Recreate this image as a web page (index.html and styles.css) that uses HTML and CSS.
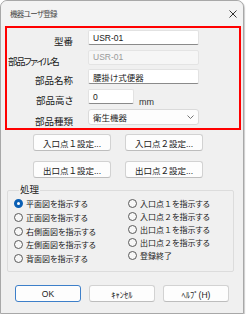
FILE: index.html
```html
<!doctype html>
<html lang="ja">
<head>
    <meta charset="UTF-8">
    <title>機器ユーザ登録</title>
    <link rel="stylesheet" href="styles.css">
</head>
<body>
    <div class="window">
<!--    title bar    -->
        <div class="titlebar">
            <span class="title">機器ユーザ登録</span>
            <svg class="close" width="8" height="8" viewBox="0 0 8 8">
                <path d="M0.5 0.5L7.5 7.5M7.5 0.5L0.5 7.5" stroke="#333" stroke-width="1" fill="none"/>
            </svg>
        </div>

<!--    properties    -->
        <div class="props">
            <span class="lbl">型番</span>
            <div class="row"><div class="edit wide">USR-01</div></div>

            <span class="lbl left">部品ファイル名</span>
            <div class="row"><div class="edit wide disabled">USR-01</div></div>

            <span class="lbl">部品名称</span>
            <div class="row"><div class="edit wide">腰掛け式便器</div></div>

            <span class="lbl">部品高さ</span>
            <div class="row"><div class="edit short">0</div><span class="unit">mm</span></div>

            <span class="lbl">部品種類</span>
            <div class="row">
                <div class="combo">
                    <span>衛生機器</span>
                    <svg width="7" height="4" viewBox="0 0 7 4">
                        <path d="M0.5 0.5L3.5 3.5L6.5 0.5" stroke="#666" stroke-width="0.9" fill="none"/>
                    </svg>
                </div>
            </div>
        </div>

<!--    point buttons    -->
        <div class="points">
            <div class="btn">入口点<span class="fw">１</span>設定...</div>
            <div class="btn">入口点<span class="fw">２</span>設定...</div>
            <div class="btn">出口点<span class="fw">１</span>設定...</div>
            <div class="btn">出口点<span class="fw">２</span>設定...</div>
        </div>

<!--    process group    -->
        <fieldset class="group">
            <legend>処理</legend>
            <div class="col col-left">
                <div class="opt"><span class="radio on"></span>平面図を指示する</div>
                <div class="opt"><span class="radio"></span>正面図を指示する</div>
                <div class="opt"><span class="radio"></span>右側面図を指示する</div>
                <div class="opt"><span class="radio"></span>左側面図を指示する</div>
                <div class="opt"><span class="radio"></span>背面図を指示する</div>
            </div>
            <div class="col col-right">
                <div class="opt"><span class="radio"></span>入口点<span class="fw">１</span>を指示する</div>
                <div class="opt"><span class="radio"></span>入口点<span class="fw">２</span>を指示する</div>
                <div class="opt"><span class="radio"></span>出口点<span class="fw">１</span>を指示する</div>
                <div class="opt"><span class="radio"></span>出口点<span class="fw">２</span>を指示する</div>
                <div class="opt"><span class="radio"></span>登録終了</div>
            </div>
        </fieldset>

<!--    dialog buttons    -->
        <div class="actions">
            <div class="btn default">OK</div>
            <div class="btn">ｷｬﾝｾﾙ</div>
            <div class="btn">ﾍﾙﾌﾟ(H)</div>
        </div>
    </div>
</body>
</html>
```

FILE: styles.css
```css
* {
    margin: 0;
    padding: 0;
    box-sizing: border-box;
}
body {
    background: #fff;
    font-family: "Liberation Sans", "Noto Sans CJK JP", sans-serif;
    font-feature-settings: "palt";
    font-size: 8px;
    color: #1a1a1a;
}
.fw {
    font-feature-settings: normal;
}

/*window start*/
.window {
    width: 244px;
    height: 314px;
    border: 1px solid #a8a8a8;
    border-radius: 7px 7px 0 0;
    background: #f0f0f0;
    box-shadow: 1px 1px 1px rgba(0, 0, 0, .2);
}
.titlebar {
    display: flex;
    align-items: center;
    justify-content: space-between;
    height: 25px;
    padding: 0 6px 0 9px;
    background: #f3f3f3;
    border-radius: 7px 7px 0 0;
}
.titlebar .title {
    font-size: 7.5px;
    letter-spacing: -0.7px;
    color: #444;
}
/*window end*/

/*props start*/
.props {
    display: grid;
    grid-template-columns: 66px 111px;
    grid-template-rows: repeat(4, 15px) 16px;
    column-gap: 15px;
    row-gap: 4.7px;
    width: 236px;
    height: 104px;
    margin-left: 4px;
    padding: 2px 0 0 0;
    border: 2px solid #f00;
}
.props .lbl {
    align-self: end;
    justify-self: end;
    font-size: 9.5px;
    line-height: 12px;
    margin-bottom: -3px;
    white-space: nowrap;
}
.props .lbl.left {
    justify-self: start;
    padding-left: 1px;
    letter-spacing: -1.6px;
}
.props .row {
    display: flex;
    align-items: stretch;
}
.edit {
    display: flex;
    align-items: center;
    padding-left: 4px;
    background: #fff;
    border: 1px solid #e2e2e2;
    border-bottom-color: #8a8a8a;
    border-radius: 2px;
    font-size: 8.5px;
}
.edit.wide {
    width: 111px;
}
.edit.short {
    width: 46px;
}
.edit.disabled {
    background: #f6f6f6;
    border-color: #e4e4e4;
    color: #9a9a9a;
}
.unit {
    align-self: end;
    margin: 0 0 -3px 5px;
    font-size: 9px;
    color: #333;
}
.combo {
    display: flex;
    align-items: center;
    justify-content: space-between;
    width: 112px;
    padding: 0 4px 0 4px;
    background: #fdfdfd;
    border: 1px solid #dadada;
    border-radius: 3px;
    font-size: 8.5px;
}
/*props end*/

/*buttons start*/
.btn {
    display: flex;
    align-items: center;
    justify-content: center;
    height: 17px;
    background: #fdfdfd;
    border: 1px solid #d2d2d2;
    border-bottom-color: #bdbdbd;
    border-radius: 3px;
    font-size: 8.5px;
    color: #1a1a1a;
}
.points {
    display: grid;
    grid-template-columns: 78px 78px;
    column-gap: 14px;
    row-gap: 10px;
    margin: 4px 0 0 32px;
}
.actions {
    display: flex;
    gap: 8px;
    margin: 13px 0 0 14px;
}
.actions .btn {
    width: 66px;
}
.actions .btn.default {
    border-color: #3d7fc9;
}
/*buttons end*/

/*group start*/
.group {
    display: flex;
    width: 227px;
    height: 88px;
    margin: 6px 0 0 6px;
    padding: 1px 0 0 6px;
    border: 1px solid #dcdcdc;
    border-radius: 2px;
}
.group legend {
    margin-left: 5px;
    padding: 0 1px;
    font-size: 9.5px;
    line-height: 12px;
}
.col-left {
    width: 114px;
}
.opt {
    display: flex;
    align-items: center;
    white-space: nowrap;
    font-size: 8px;
}
.col-left .opt {
    height: 13.7px;
}
.col-right .opt {
    height: 13.1px;
}
.radio {
    width: 9px;
    height: 9px;
    margin-right: 3px;
    border: 1px solid #5a5a5a;
    border-radius: 50%;
    background: #f7f7f7;
}
.radio.on {
    border: 3px solid #0a5fb4;
    background: #fff;
}
/*group end*/
```
